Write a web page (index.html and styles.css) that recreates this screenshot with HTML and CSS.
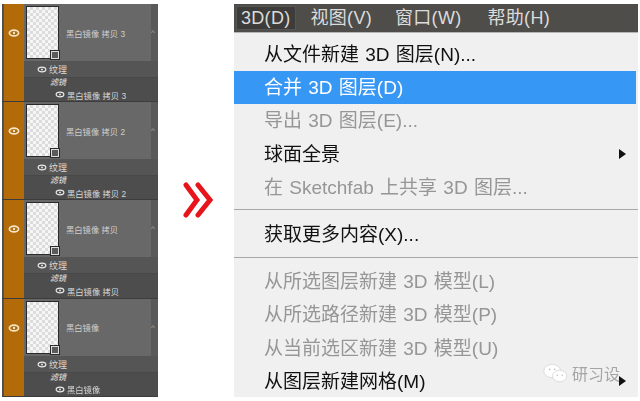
FILE: index.html
```html
<!DOCTYPE html>
<html lang="en">
<head>
  <meta charset="UTF-8">
  <title>3D menu</title>
  <link rel="stylesheet" href="styles.css">
</head>
<body>
  <div class="page">
    <div class="layers">
      <div class="layer">
        <div class="stripe"><svg class="eye-main" viewBox="0 0 12 8"><ellipse cx="6" cy="4" rx="4.6" ry="2.9" fill="none" stroke="#f4e4c8" stroke-width="1.7"/><circle cx="6" cy="4" r="1.2" fill="#f4e4c8"/></svg></div>
        <div class="layer-body">
          <div class="main-row">
            <div class="thumb"><span class="badge"></span></div>
            <span class="name">黑白镜像 拷贝 3</span>
            <span class="scroll">^</span>
          </div>
          <div class="sub-row"><svg class="eye" viewBox="0 0 12 8"><ellipse cx="6" cy="4" rx="4.6" ry="2.8" fill="none" stroke="#e8e8e8" stroke-width="1.5"/><circle cx="6" cy="4" r="1.1" fill="#e8e8e8"/></svg>纹理</div>
          <div class="filter-label">滤镜</div>
          <div class="filter-row"><svg class="eye" viewBox="0 0 12 8"><ellipse cx="6" cy="4" rx="4.6" ry="2.8" fill="none" stroke="#e8e8e8" stroke-width="1.5"/><circle cx="6" cy="4" r="1.1" fill="#e8e8e8"/></svg>黑白镜像 拷贝 3</div>
        </div>
      </div>
      <div class="layer">
        <div class="stripe"><svg class="eye-main" viewBox="0 0 12 8"><ellipse cx="6" cy="4" rx="4.6" ry="2.9" fill="none" stroke="#f4e4c8" stroke-width="1.7"/><circle cx="6" cy="4" r="1.2" fill="#f4e4c8"/></svg></div>
        <div class="layer-body">
          <div class="main-row">
            <div class="thumb"><span class="badge"></span></div>
            <span class="name">黑白镜像 拷贝 2</span>
            <span class="scroll">^</span>
          </div>
          <div class="sub-row"><svg class="eye" viewBox="0 0 12 8"><ellipse cx="6" cy="4" rx="4.6" ry="2.8" fill="none" stroke="#e8e8e8" stroke-width="1.5"/><circle cx="6" cy="4" r="1.1" fill="#e8e8e8"/></svg>纹理</div>
          <div class="filter-label">滤镜</div>
          <div class="filter-row"><svg class="eye" viewBox="0 0 12 8"><ellipse cx="6" cy="4" rx="4.6" ry="2.8" fill="none" stroke="#e8e8e8" stroke-width="1.5"/><circle cx="6" cy="4" r="1.1" fill="#e8e8e8"/></svg>黑白镜像 拷贝 2</div>
        </div>
      </div>
      <div class="layer">
        <div class="stripe"><svg class="eye-main" viewBox="0 0 12 8"><ellipse cx="6" cy="4" rx="4.6" ry="2.9" fill="none" stroke="#f4e4c8" stroke-width="1.7"/><circle cx="6" cy="4" r="1.2" fill="#f4e4c8"/></svg></div>
        <div class="layer-body">
          <div class="main-row">
            <div class="thumb"><span class="badge"></span></div>
            <span class="name">黑白镜像 拷贝</span>
            <span class="scroll">^</span>
          </div>
          <div class="sub-row"><svg class="eye" viewBox="0 0 12 8"><ellipse cx="6" cy="4" rx="4.6" ry="2.8" fill="none" stroke="#e8e8e8" stroke-width="1.5"/><circle cx="6" cy="4" r="1.1" fill="#e8e8e8"/></svg>纹理</div>
          <div class="filter-label">滤镜</div>
          <div class="filter-row"><svg class="eye" viewBox="0 0 12 8"><ellipse cx="6" cy="4" rx="4.6" ry="2.8" fill="none" stroke="#e8e8e8" stroke-width="1.5"/><circle cx="6" cy="4" r="1.1" fill="#e8e8e8"/></svg>黑白镜像 拷贝</div>
        </div>
      </div>
      <div class="layer">
        <div class="stripe"><svg class="eye-main" viewBox="0 0 12 8"><ellipse cx="6" cy="4" rx="4.6" ry="2.9" fill="none" stroke="#f4e4c8" stroke-width="1.7"/><circle cx="6" cy="4" r="1.2" fill="#f4e4c8"/></svg></div>
        <div class="layer-body">
          <div class="main-row">
            <div class="thumb"><span class="badge"></span></div>
            <span class="name">黑白镜像</span>
            <span class="scroll">^</span>
          </div>
          <div class="sub-row"><svg class="eye" viewBox="0 0 12 8"><ellipse cx="6" cy="4" rx="4.6" ry="2.8" fill="none" stroke="#e8e8e8" stroke-width="1.5"/><circle cx="6" cy="4" r="1.1" fill="#e8e8e8"/></svg>纹理</div>
          <div class="filter-label">滤镜</div>
          <div class="filter-row"><svg class="eye" viewBox="0 0 12 8"><ellipse cx="6" cy="4" rx="4.6" ry="2.8" fill="none" stroke="#e8e8e8" stroke-width="1.5"/><circle cx="6" cy="4" r="1.1" fill="#e8e8e8"/></svg>黑白镜像</div>
        </div>
      </div>
    </div>

    <div class="arrow-col">
      <svg class="arrows" viewBox="0 0 32 36"><path d="M3 3 L14 18 L3 33 M15 3 L27 18 L15 33" fill="none" stroke="#e8141c" stroke-width="5" stroke-linecap="round" stroke-linejoin="miter"/></svg>
    </div>

    <div class="menu">
      <div class="menu-bar">
        <span class="bar-item active">3D(D)</span>
        <span class="bar-item">视图(V)</span>
        <span class="bar-item">窗口(W)</span>
        <span class="bar-item help">帮助(H)</span>
      </div>
      <div class="menu-list">
        <div class="item">从文件新建 3D 图层(N)...</div>
        <div class="item hover">合并 3D 图层(D)</div>
        <div class="item off">导出 3D 图层(E)...</div>
        <div class="item sub">球面全景</div>
        <div class="item off">在 Sketchfab 上共享 3D 图层...</div>
        <div class="sep first"></div>
        <div class="item">获取更多内容(X)...</div>
        <div class="sep"></div>
        <div class="item off">从所选图层新建 3D 模型(L)</div>
        <div class="item off">从所选路径新建 3D 模型(P)</div>
        <div class="item off">从当前选区新建 3D 模型(U)</div>
        <div class="item sub">从图层新建网格(M)</div>
      </div>
      <div class="mark">
        <svg class="wechat" viewBox="0 0 30 24"><ellipse cx="11" cy="9" rx="10" ry="8" fill="#fff" stroke="#cfcfcf" stroke-width=".8"/><ellipse cx="20" cy="15" rx="8.5" ry="7" fill="#fff" stroke="#cfcfcf" stroke-width=".8"/><circle cx="8" cy="7" r="1" fill="#bbb"/><circle cx="14" cy="7" r="1" fill="#bbb"/><circle cx="17" cy="14" r=".9" fill="#bbb"/><circle cx="23" cy="14" r=".9" fill="#bbb"/></svg>
        <span>研习设</span>
      </div>
    </div>
  </div>
</body>
</html>
```

FILE: styles.css
```css
body {
  margin: 0;
  background: #fff;
  font-family: "Liberation Sans", "Noto Sans CJK SC", sans-serif;
}

.page {
  display: flex;
  width: 640px;
  height: 401px;
  padding: 4px 2px 4px 2px;
  box-sizing: border-box;
  overflow: hidden;
  filter: blur(0.35px);
}

/* layers panel */
.layers {
  width: 156px;
  flex-shrink: 0;
  display: flex;
  flex-direction: column;
  background: #4d4d4d;
}

.layer {
  display: flex;
  height: 98.2px;
  border-bottom: 1px solid #3c3c3c;
  box-sizing: border-box;
}

.stripe {
  width: 21px;
  margin-left: 1px;
  background: #b36a08;
  display: flex;
  align-items: flex-start;
  justify-content: center;
  border-left: 1px solid #5b5147;
  box-sizing: border-box;
  flex-shrink: 0;
}

.eye-main {
  width: 12px;
  height: 8px;
  margin-top: 25px;
}

.layer-body {
  flex: 1;
  min-width: 0;
  color: #d8d8d8;
  font-size: 8.3px;
}

.main-row {
  height: 58px;
  display: flex;
  align-items: center;
  background: #686868;
  border-bottom: 1px solid #555;
  box-sizing: border-box;
}

.thumb {
  width: 33px;
  height: 53px;
  margin-left: 2px;
  position: relative;
  flex-shrink: 0;
  border: 1px solid #2a2a2a;
  box-sizing: border-box;
  background-color: #f6f6f6;
  background-image: conic-gradient(#dcdcdc 25%, transparent 0 50%, #dcdcdc 0 75%, transparent 0);
  background-size: 6px 6px;
}

.badge {
  position: absolute;
  right: -2px;
  bottom: -2px;
  width: 10px;
  height: 10px;
  background: #5a5a5a;
  border: 1px solid #2a2a2a;
  outline: 1px solid #ddd;
  outline-offset: -2px;
  box-sizing: border-box;
}

.name {
  margin-left: 7px;
  flex: 1;
  white-space: nowrap;
  color: #cfcfcf;
}

.scroll {
  width: 7px;
  height: 100%;
  background: #5a5a5a;
  color: #aaa;
  display: flex;
  align-items: center;
  font-size: 8px;
}

.sub-row {
  height: 16px;
  display: flex;
  align-items: center;
  padding-left: 13px;
  background: #555;
  border-bottom: 1px solid #484848;
  box-sizing: border-box;
  font-size: 9px;
}

.filter-label {
  height: 10px;
  line-height: 10px;
  padding-left: 26px;
  font-size: 8px;
  font-style: italic;
  color: #eee;
}

.filter-row {
  height: 13px;
  display: flex;
  align-items: center;
  padding-left: 31px;
}

.eye {
  width: 10px;
  height: 7px;
  margin-right: 2px;
}

/* arrow between panels */
.arrow-col {
  width: 76px;
  flex-shrink: 0;
  display: flex;
  align-items: center;
  justify-content: center;
  padding-left: 6px;
  box-sizing: border-box;
  padding-bottom: 2px;
}

.arrows {
  width: 32px;
  height: 36px;
}

/* photoshop menu */
.menu {
  width: 404px;
  flex-shrink: 0;
  position: relative;
  background: #f0f0f0;
  font-size: 19px;
  word-spacing: 1px;
}

.menu-bar {
  height: 28px;
  display: flex;
  align-items: center;
  padding-left: 2px;
  gap: 15px;
  background: #4f4d4a;
  color: #dcdcdc;
  font-size: 18px;
  letter-spacing: 0.3px;
  border-bottom: 1px solid #b5b5b5;
}

.bar-item {
  padding: 0 4px;
  line-height: 26px;
}

.bar-item.active {
  background: #3d3c3a;
  border: 1px solid #555;
  box-sizing: border-box;
  height: 24px;
  line-height: 22px;
  margin-right: -4px;
}

.bar-item.help {
  margin-left: 3px;
}

.menu-list {
  padding-top: 5px;
}

.item {
  height: 33.2px;
  line-height: 33px;
  padding-left: 30px;
  margin-right: 2px;
  color: #111;
  white-space: nowrap;
  position: relative;
}

.item.hover {
  background: #3797f5;
  color: #fff;
}

.item.off {
  color: #969696;
}

.item.sub::after {
  content: "";
  position: absolute;
  right: 10px;
  top: 11px;
  border-left: 7px solid #111;
  border-top: 5px solid transparent;
  border-bottom: 5px solid transparent;
}

.sep {
  height: 1px;
  margin: 6px 0 7px 0;
  background: #a8a8a8;
}

.sep.first {
  margin: 5px 0 8px 0;
}

/* watermark */
.mark {
  position: absolute;
  right: 18px;
  bottom: 12px;
  display: flex;
  align-items: center;
  gap: 4px;
  color: #a5a5a5;
  font-size: 16px;
}

.wechat {
  width: 25px;
  height: 21px;
}
```
